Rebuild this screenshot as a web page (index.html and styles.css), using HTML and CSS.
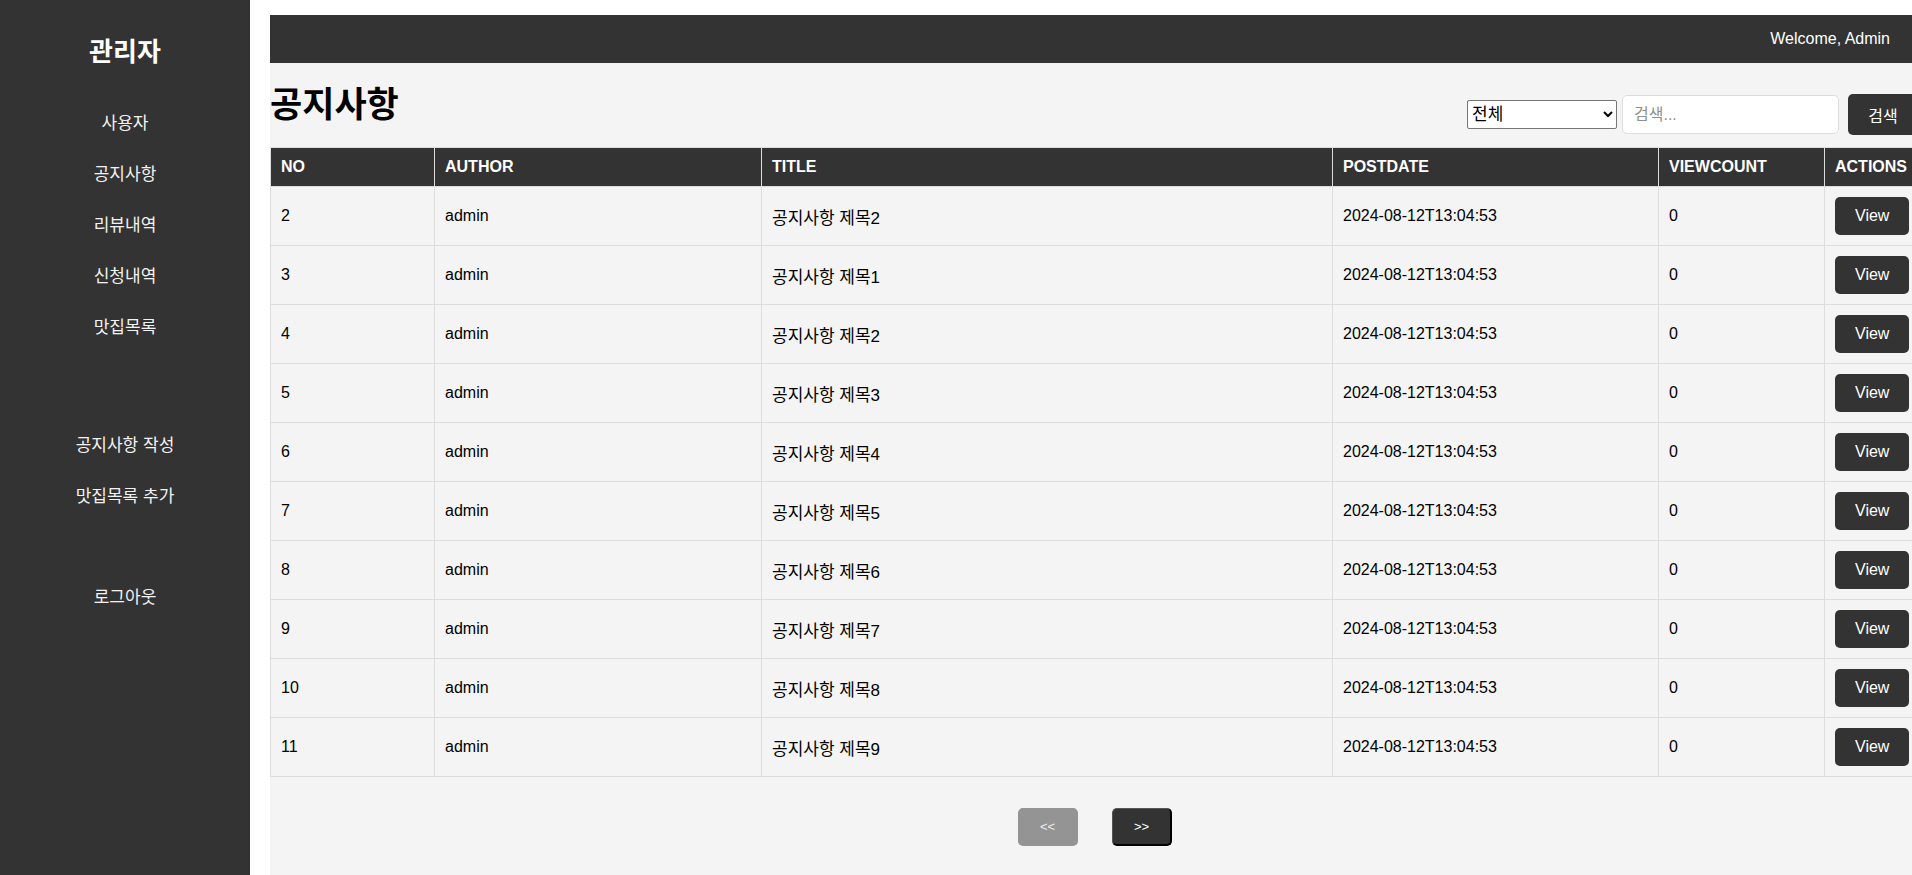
FILE: index.html
```html
<!DOCTYPE html>
<html lang="ko">
<head>
<meta charset="utf-8">
<title>관리자 - 공지사항</title>
<link rel="stylesheet" href="styles.css">
</head>
<body>
<aside class="sidebar">
  <h2 class="brand">관리자</h2>
  <ul class="menu">
    <li>사용자</li>
    <li>공지사항</li>
    <li>리뷰내역</li>
    <li>신청내역</li>
    <li>맛집목록</li>
  </ul>
  <ul class="menu menu-write">
    <li>공지사항 작성</li>
    <li>맛집목록 추가</li>
  </ul>
  <ul class="menu menu-logout">
    <li>로그아웃</li>
  </ul>
</aside>
<main class="main">
  <header class="topbar">Welcome, Admin</header>
  <div class="toolbar">
    <h1 class="page-title">공지사항</h1>
    <form class="search">
      <select class="search-select">
        <option>전체</option>
      </select>
      <input class="search-input" type="text" placeholder="검색...">
      <button class="search-btn" type="button">검색</button>
    </form>
  </div>
  <table class="list">
    <colgroup>
      <col class="c-no"><col class="c-author"><col class="c-title"><col class="c-date"><col class="c-count"><col class="c-act">
    </colgroup>
    <thead>
      <tr><th>NO</th><th>AUTHOR</th><th>TITLE</th><th>POSTDATE</th><th>VIEWCOUNT</th><th>ACTIONS</th></tr>
    </thead>
    <tbody>
      <tr><td>2</td><td>admin</td><td class="title-cell">공지사항 제목2</td><td>2024-08-12T13:04:53</td><td>0</td><td><button class="view-btn" type="button">View</button></td></tr>
      <tr><td>3</td><td>admin</td><td class="title-cell">공지사항 제목1</td><td>2024-08-12T13:04:53</td><td>0</td><td><button class="view-btn" type="button">View</button></td></tr>
      <tr><td>4</td><td>admin</td><td class="title-cell">공지사항 제목2</td><td>2024-08-12T13:04:53</td><td>0</td><td><button class="view-btn" type="button">View</button></td></tr>
      <tr><td>5</td><td>admin</td><td class="title-cell">공지사항 제목3</td><td>2024-08-12T13:04:53</td><td>0</td><td><button class="view-btn" type="button">View</button></td></tr>
      <tr><td>6</td><td>admin</td><td class="title-cell">공지사항 제목4</td><td>2024-08-12T13:04:53</td><td>0</td><td><button class="view-btn" type="button">View</button></td></tr>
      <tr><td>7</td><td>admin</td><td class="title-cell">공지사항 제목5</td><td>2024-08-12T13:04:53</td><td>0</td><td><button class="view-btn" type="button">View</button></td></tr>
      <tr><td>8</td><td>admin</td><td class="title-cell">공지사항 제목6</td><td>2024-08-12T13:04:53</td><td>0</td><td><button class="view-btn" type="button">View</button></td></tr>
      <tr><td>9</td><td>admin</td><td class="title-cell">공지사항 제목7</td><td>2024-08-12T13:04:53</td><td>0</td><td><button class="view-btn" type="button">View</button></td></tr>
      <tr><td>10</td><td>admin</td><td class="title-cell">공지사항 제목8</td><td>2024-08-12T13:04:53</td><td>0</td><td><button class="view-btn" type="button">View</button></td></tr>
      <tr><td>11</td><td>admin</td><td class="title-cell">공지사항 제목9</td><td>2024-08-12T13:04:53</td><td>0</td><td><button class="view-btn" type="button">View</button></td></tr>
    </tbody>
  </table>
  <div class="pager">
    <button class="pager-btn pager-btn--disabled" type="button" disabled>&lt;&lt;</button>
    <button class="pager-btn" type="button">&gt;&gt;</button>
  </div>
</main>
</body>
</html>
```

FILE: styles.css
```css
html, body {
  margin: 0;
  height: 100%;
}

body {
  display: flex;
  background: #ffffff;
  font-family: "Liberation Sans", "Noto Sans CJK KR", sans-serif;
  font-size: 16px;
  color: #000;
  overflow: hidden;
}

/* Sidebar */
.sidebar {
  flex: none;
  width: 250px;
  height: 100vh;
  box-sizing: border-box;
  padding-top: 36px;
  background: #333333;
  color: #ffffff;
  text-align: center;
}

.brand {
  margin: 0;
  font-size: 26px;
  line-height: 32px;
  font-weight: bold;
}

.menu {
  list-style: none;
  margin: 30px 0 0;
  padding: 0;
}

.menu li {
  padding: 15px 0;
  font-size: 17px;
  line-height: 21px;
  color: #f2f2f2;
}

.menu-write {
  margin-top: 67px;
}

.menu-logout {
  margin-top: 50px;
}

/* Main */
.main {
  flex: none;
  width: 1650px;
  height: calc(100vh - 15px);
  margin: 15px 0 0 20px;
  background: #f4f4f4;
}

.topbar {
  height: 48px;
  box-sizing: border-box;
  padding: 0 30px;
  display: flex;
  align-items: center;
  justify-content: flex-end;
  background: #333333;
  color: #ffffff;
  font-size: 16px;
}

.toolbar {
  display: flex;
  justify-content: space-between;
  align-items: flex-start;
  padding: 20px 0 12px;
}

.page-title {
  margin: 0;
  font-size: 35px;
  line-height: 44px;
  font-weight: bold;
}

.search {
  display: flex;
  align-items: center;
  height: 41px;
  margin: 11px 2px 0 0;
}

.search-select {
  width: 150px;
  height: 29px;
  margin: 0 5px 0 0;
  font-family: "Liberation Sans", "Noto Sans CJK KR", sans-serif;
  font-size: 17px;
  background: #fff;
  border: 1px solid #767676;
  border-radius: 2px;
  color: #000;
}

.search-input {
  width: 217px;
  height: 39px;
  box-sizing: border-box;
  margin: 0 9px 0 0;
  padding: 0 11px;
  border: 1px solid #dddddd;
  border-radius: 5px;
  background: #fff;
  font-family: "Liberation Sans", "Noto Sans CJK KR", sans-serif;
  font-size: 16px;
  outline: none;
}

.search-input::placeholder {
  color: #8f8f8f;
}

.search-btn {
  width: 70px;
  height: 41px;
  padding: 0;
  border: 0;
  border-radius: 5px;
  background: #333333;
  color: #ffffff;
  font-family: "Liberation Sans", "Noto Sans CJK KR", sans-serif;
  font-size: 16px;
}

/* Table */
.list {
  width: 1650px;
  table-layout: fixed;
  border-collapse: collapse;
}

.c-no { width: 164px; }
.c-author { width: 327px; }
.c-title { width: 571px; }
.c-date { width: 326px; }
.c-count { width: 166px; }
.c-act { width: 96px; }

.list th,
.list td {
  padding: 10px;
  border: 1px solid #dddddd;
  text-align: left;
  font-size: 16px;
  line-height: 18px;
  white-space: nowrap;
}

.list th {
  background: #333333;
  color: #ffffff;
  font-weight: bold;
}

.list td {
  color: #000;
}

.list td.title-cell {
  font-size: 17px;
  padding-top: 13px;
  padding-bottom: 7px;
}

.view-btn {
  display: block;
  padding: 10px 20px;
  border: 0;
  border-radius: 5px;
  background: #333333;
  color: #ffffff;
  font-family: "Liberation Sans", sans-serif;
  font-size: 16px;
  line-height: 18px;
}

/* Pagination */
.pager {
  display: flex;
  justify-content: center;
  gap: 34px;
  margin-top: 31px;
}

.pager-btn {
  width: 60px;
  height: 38px;
  box-sizing: border-box;
  padding: 0;
  border-style: solid;
  border-width: 1px 2px 2px 1px;
  border-color: #555555 #000000 #000000 #555555;
  border-radius: 5px;
  background: #333333;
  color: #ffffff;
  font-family: "Liberation Sans", sans-serif;
  font-size: 13px;
}

.pager-btn--disabled {
  border-color: #949494;
  background: #949494;
  color: #eeeeee;
}
```
